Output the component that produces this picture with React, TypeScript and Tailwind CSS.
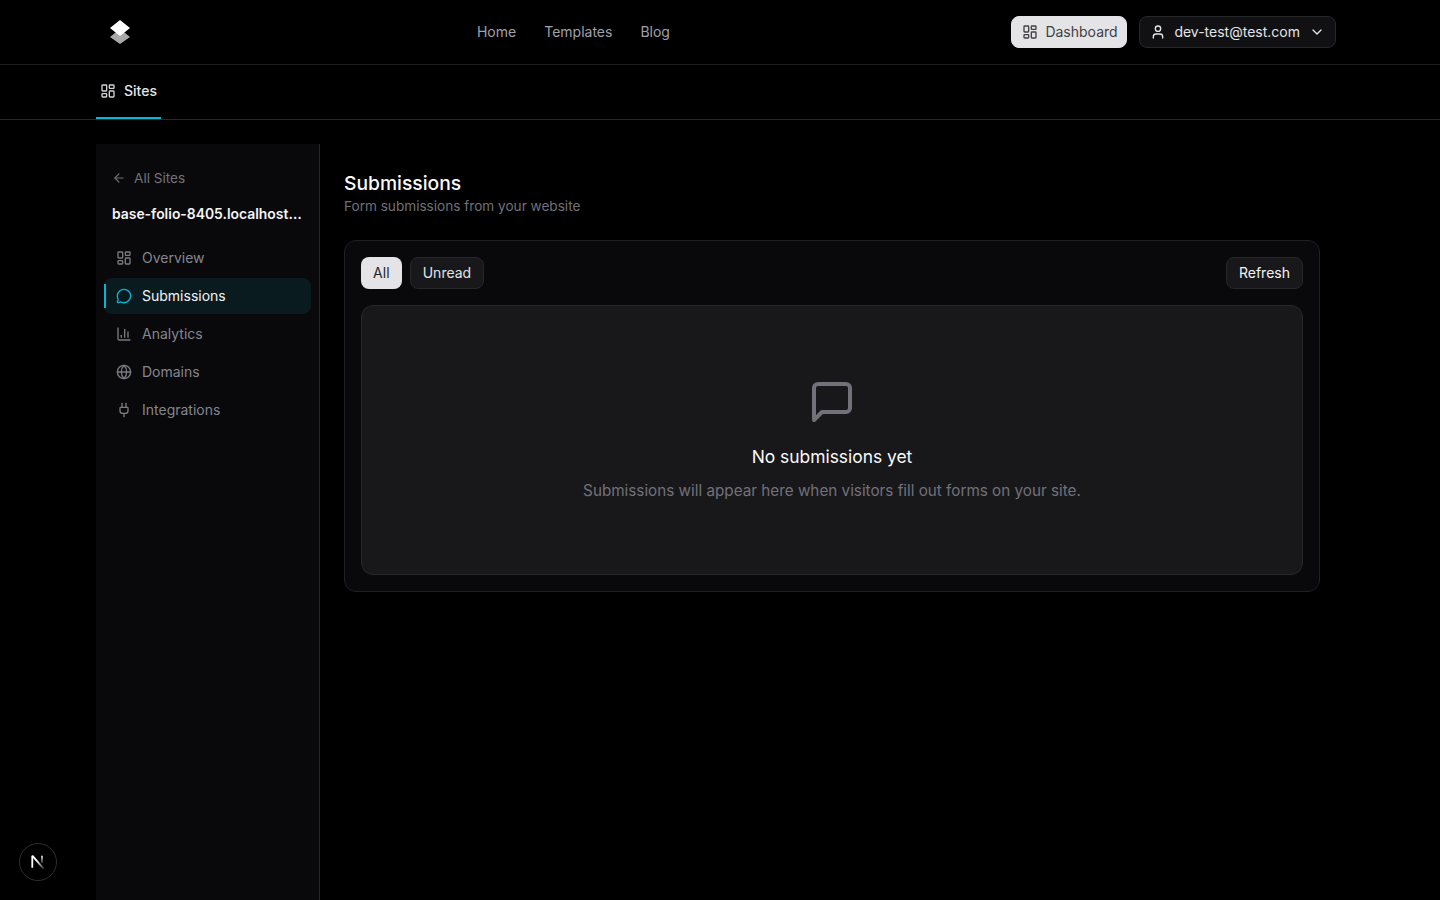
import { ArrowLeft, ChartColumn, ChevronDown, Globe, LayoutDashboard, MessageCircle, Plug, User } from "lucide-react";

const font = { fontFamily: "Inter, sans-serif" };

const items = [
  { label: "Overview", Icon: LayoutDashboard },
  { label: "Submissions", Icon: MessageCircle, active: true },
  { label: "Analytics", Icon: ChartColumn },
  { label: "Domains", Icon: Globe },
  { label: "Integrations", Icon: Plug },
];

function Logo() {
  return (
    <svg width="24" height="24" viewBox="0 0 24 24" className="block">
      <path d="M12 9 22 17 12 24 2 17Z" fill="#a8a8a8" />
      <path d="M12 0 22 8 12 16 2 8Z" fill="#ffffff" />
    </svg>
  );
}

export default function App() {
  return (
    <div className="h-[900px] overflow-hidden bg-black text-white relative" style={font}>
      <header className="h-[65px] border-b border-[#1f1f22]">
        <div className="mx-auto w-[1248px] h-16 px-2 flex items-center justify-between">
          <div className="w-8 flex justify-center"><Logo /></div>
          <nav className="flex items-center gap-7 text-sm text-[#a1a1aa]">
            <span>Home</span>
            <span>Templates</span>
            <span>Blog</span>
          </nav>
          <div className="flex items-center gap-3">
            <button className="h-8 w-[116.5px] pl-2.5 flex items-center gap-[7.5px] rounded-lg border border-[#e4e4e7] bg-[#e4e4e7] text-[#3f3f46] text-sm font-normal">
              <LayoutDashboard size={16} strokeWidth={2} />
              <span>Dashboard</span>
            </button>
            <button className="h-8 pl-2.5 pr-[10px] flex items-center gap-2 rounded-lg bg-[#111113] border border-[#27272a] text-[#e4e4e7] text-sm font-normal">
              <User size={16} strokeWidth={2} />
              <span>dev-test@test.com</span>
              <ChevronDown size={16} strokeWidth={2} className="ml-[1px]" />
            </button>
          </div>
        </div>
      </header>

      <div className="h-[55px] border-b border-[#27272a]">
        <div className="mx-auto w-[1248px] h-full">
          <div className="w-[65px] h-[54px] px-1 flex items-center gap-2 border-b-2 border-[#06b6d4] text-sm font-medium text-[#e4e4e7]">
            <LayoutDashboard size={16} strokeWidth={2} className="text-[#d4d4d8]" />
            <span>Sites</span>
          </div>
        </div>
      </div>

      <div className="mx-auto w-[1248px] mt-6 flex items-stretch h-[756px]">
        <aside className="w-[224px] shrink-0 bg-[#09090b] border-r border-[#27272a] pt-6">
          <div className="pl-4 h-5 flex items-center gap-2 text-[13.6px] text-[#71717a]">
            <ArrowLeft size={14} strokeWidth={2} />
            <span>All Sites</span>
          </div>
          <div className="mt-4 pl-4 pr-[15px] text-[13.9px] leading-5 font-semibold text-[#f4f4f5] truncate">base-folio-8405.localhost:3000</div>
          <nav className="mt-4 px-2 flex flex-col gap-0.5">
            {items.map(({ label, Icon, active }) => (
              <div
                key={label}
                className={active
                  ? "relative h-9 rounded-lg bg-[#0a1b20] pl-3 flex items-center gap-2.5 text-sm font-normal text-[#f4f4f5]"
                  : "h-9 rounded-lg pl-3 flex items-center gap-2.5 text-sm font-normal text-[#85858e]"}
              >
                {active && <span className="absolute left-0 top-1.5 h-6 w-0.5 bg-[#06b6d4]" />}
                <Icon size={16} strokeWidth={2} className={active ? "text-[#06b6d4]" : "text-[#7a7a83]"} />
                <span>{label}</span>
              </div>
            ))}
          </nav>
        </aside>

        <main className="flex-1 px-6 pt-6">
          <h1 className="text-[19.3px] leading-7 font-medium text-[#fafafa] mt-[1px]">Submissions</h1>
          <p className="text-[13.6px] leading-5 text-[#71717a] mt-[-1px]">Form submissions from your website</p>
          <section className="mt-6 h-[352px] rounded-xl border border-[#1f1f23] bg-[#09090b] p-4">
            <div className="flex items-center justify-between">
              <div className="flex items-center gap-2">
                <button className="h-8 w-[40.7px] rounded-lg bg-[#e4e4e7] text-[#27272a] text-sm font-normal">All</button>
                <button className="h-8 px-3 rounded-lg bg-[#18181b] border border-[#27272a] text-[#e4e4e7] text-sm font-normal">Unread</button>
              </div>
              <button className="h-8 px-3 rounded-lg bg-[#18181b] border border-[#27272a] text-[#f4f4f5] text-sm font-normal">Refresh</button>
            </div>
            <div className="mt-4 h-[270px] rounded-xl border border-[#27272a] bg-[#18181b] flex flex-col items-center pt-[72px]">
              <svg width="48" height="48" viewBox="0 0 24 24" fill="none" stroke="#71717a" strokeWidth="2" strokeLinecap="round" strokeLinejoin="round">
                <path d="M21 15a2 2 0 0 1-2 2H7l-4 4V5a2 2 0 0 1 2-2h14a2 2 0 0 1 2 2z" />
              </svg>
              <h2 className="mt-[17px] text-[17.4px] leading-7 font-normal text-[#fafafa]">No submissions yet</h2>
              <p className="mt-2 text-[15.25px] leading-6 text-[#71717a]">Submissions will appear here when visitors fill out forms on your site.</p>
            </div>
          </section>
        </main>
      </div>

      <div className="absolute left-[19px] top-[843px] w-[38px] h-[38px] rounded-full bg-black border border-[#2e2e2e] flex items-center justify-center">
        <svg width="16" height="16" viewBox="0 0 14 14" fill="none">
          <defs>
            <linearGradient id="nd" x1="2" y1="1.5" x2="12" y2="13" gradientUnits="userSpaceOnUse">
              <stop offset="0.4" stopColor="#ffffff" />
              <stop offset="1" stopColor="#ffffff" stopOpacity="0.15" />
            </linearGradient>
            <linearGradient id="nr" x1="10.5" y1="1.5" x2="10.5" y2="8" gradientUnits="userSpaceOnUse">
              <stop offset="0" stopColor="#ffffff" />
              <stop offset="1" stopColor="#ffffff" stopOpacity="0.2" />
            </linearGradient>
          </defs>
          <path d="M2 1.5V12" stroke="#fff" strokeWidth="1.6" />
          <path d="M2 1.5 12 13" stroke="url(#nd)" strokeWidth="1.6" />
          <path d="M10.5 1.5V8" stroke="url(#nr)" strokeWidth="1.4" />
        </svg>
      </div>
    </div>
  );
}
